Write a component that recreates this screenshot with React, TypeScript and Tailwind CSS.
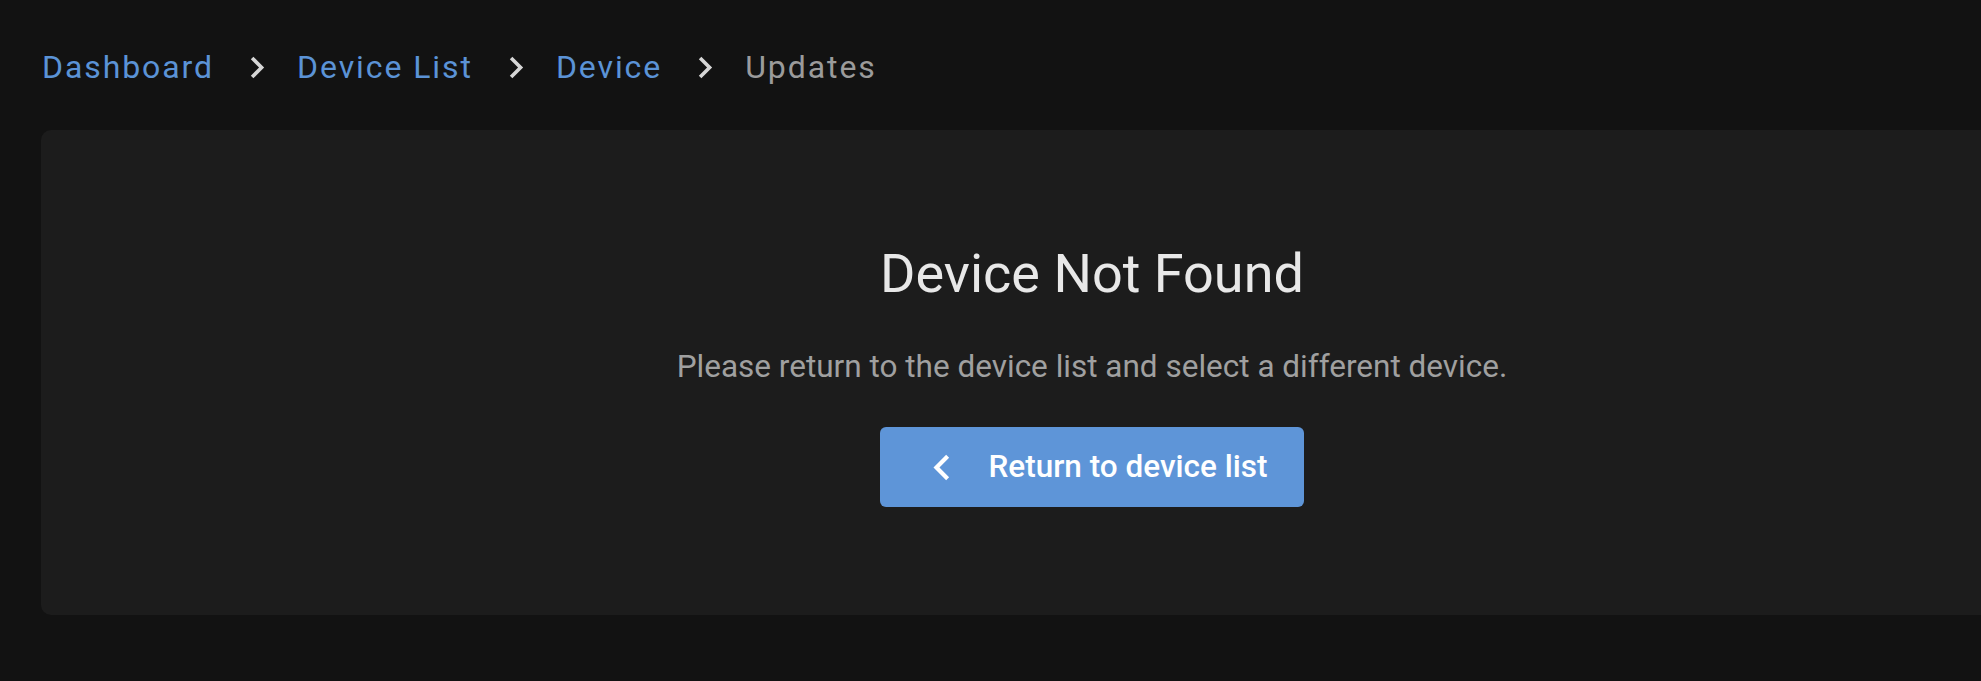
import React from 'react'

// Breadcrumb separator (chevron right)
function Sep() {
  return (
    <svg viewBox="8.2 5.6 8.2 12.8" width="15" height="23" className="ml-[36px] mr-[32px] shrink-0" fill="#d6d6d6">
      <path d="M10 6 8.59 7.41 13.17 12l-4.58 4.59L10 18l6-6z" />
    </svg>
  )
}

function BackIcon() {
  return (
    <svg viewBox="7.8 5.6 8 12.8" width="17" height="27" className="shrink-0" fill="#ffffff">
      <path d="M15.41 7.41 14 6l-6 6 6 6 1.41-1.41L10.83 12z" />
    </svg>
  )
}

export default function App() {
  return (
    <div className="min-h-screen w-full overflow-hidden bg-[#121212] font-['Roboto','Liberation_Sans',sans-serif]">
      {/* Breadcrumbs */}
      <nav className="flex items-center pl-[42px] pt-[47px] text-[32px] leading-[40px] tracking-[0.06em]">
        <span className="text-[#5b93d6]">Dashboard</span>
        <Sep />
        <span className="text-[#5b93d6]">Device List</span>
        <Sep />
        <span className="text-[#5b93d6]">Device</span>
        <Sep />
        <span className="text-[#9b9b9b]">Updates</span>
      </nav>

      {/* Not found card */}
      <div className="ml-[41px] mt-[43px] flex w-[2102px] flex-col items-center rounded-[10px] bg-[#1c1c1c] pt-[114px] pb-[108px]">
        <h1 className="text-[54px] leading-[60px] font-normal text-[#e8e8e8]">Device Not Found</h1>
        <p className="mt-[45px] text-[31.5px] leading-[36px] text-[#a0a0a0]">
          Please return to the device list and select a different device.
        </p>
        <button className="mt-[42px] flex h-[80px] items-center gap-[38px] rounded-[6px] bg-[#5e95d8] pl-[53px] pr-[36px] text-[31.5px] leading-[40px] font-medium text-white">
          <BackIcon />
          <span>Return to device list</span>
        </button>
      </div>
    </div>
  )
}
